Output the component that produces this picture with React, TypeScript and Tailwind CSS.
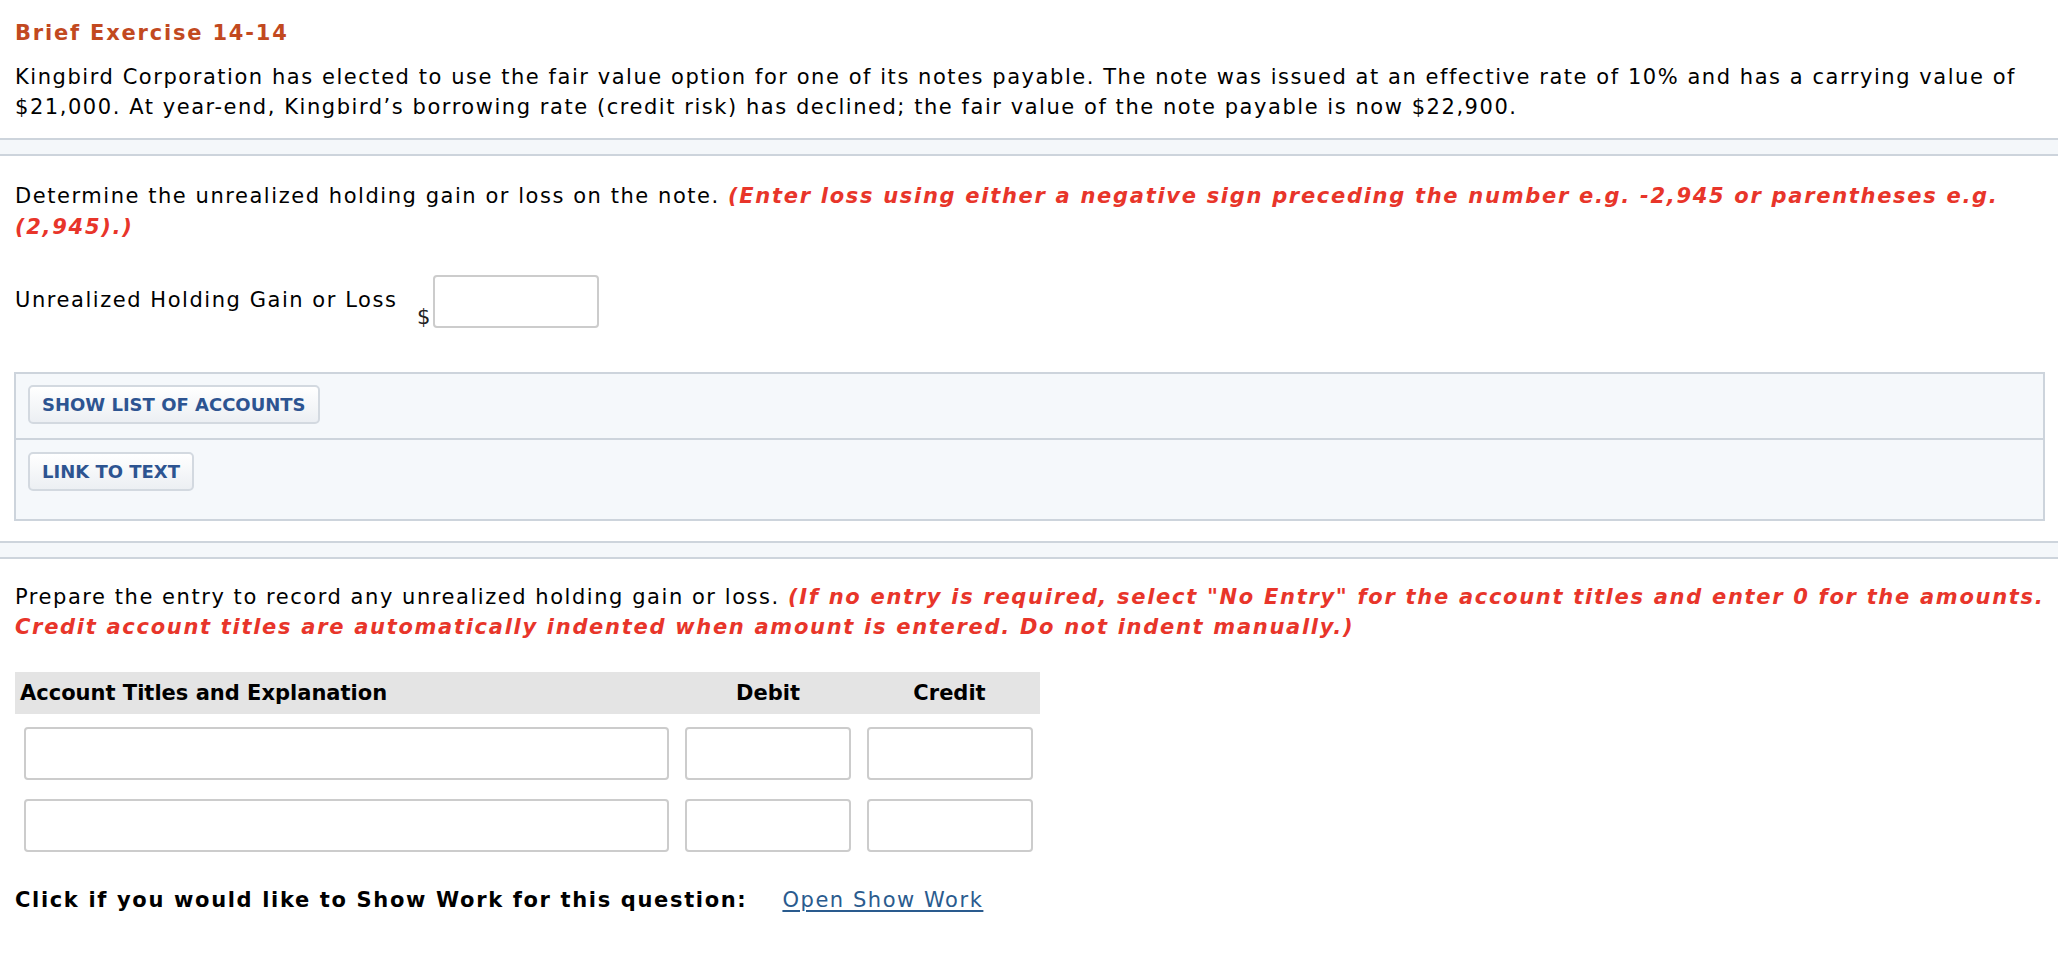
import React from 'react';

const Separator = () => (
  <div className="h-[18px] border-y-2 border-[#cdd4dc] bg-[#f4f7fa]" />
);

const ActionButton = ({ label }: { label: string }) => (
  <button className="h-[39px] px-[12px] rounded-[5px] border-2 border-[#d3d9e0] bg-gradient-to-b from-white to-[#eceff3] text-[18px] font-bold text-[#2d5491] leading-none">
    {label}
  </button>
);

const Field = ({ className }: { className: string }) => (
  <input
    type="text"
    className={`h-[53px] rounded-[4px] border-2 border-[#cccccc] bg-white outline-none ${className}`}
  />
);

const Hint = ({ children }: { children: React.ReactNode }) => (
  <span className="font-bold italic tracking-[1.7px] text-[#e8352a]">{children}</span>
);

export default function App() {
  return (
    <div className="min-h-screen bg-white text-black text-[21px] leading-[30px] tracking-[1.55px] font-['DejaVu_Sans',Verdana,sans-serif]">
      {/* Intro */}
      <div className="px-[15px] pt-[18px] pb-[16px]">
        <h2 className="font-bold tracking-[1.8px] text-[#c2491f] leading-[30px]">Brief Exercise 14-14</h2>
        <p className="mt-[14px] whitespace-nowrap">
          Kingbird Corporation has elected to use the fair value option for one of its notes payable. The note was issued at an effective rate of 10% and has a carrying value of
          <br />
          $21,000. At year-end, Kingbird’s borrowing rate (credit risk) has declined; the fair value of the note payable is now $22,900.
        </p>
      </div>

      <Separator />

      {/* Part 1 */}
      <div className="px-[15px] pt-[25px] pb-[20px]">
        <p className="whitespace-nowrap leading-[31px]">
          Determine the unrealized holding gain or loss on the note.{' '}
          <Hint>
            (Enter loss using either a negative sign preceding the number e.g. -2,945 or parentheses e.g.
            <br />
            (2,945).)
          </Hint>
        </p>

        <div className="mt-[32px] flex items-start">
          <span className="mt-[10px] w-[402px]">Unrealized Holding Gain or Loss</span>
          <div className="flex items-end">
            <span className="mr-[3px] mb-[-4px] tracking-normal text-[#222]">$</span>
            <Field className="w-[166px]" />
          </div>
        </div>

        <div className="mt-[44px] -mx-[1px] mr-[-2px] border-2 border-[#cdd4dc] bg-[#f5f8fb] tracking-normal">
          <div className="h-[64px] pt-[11px] pl-[12px]">
            <ActionButton label="SHOW LIST OF ACCOUNTS" />
          </div>
          <div className="h-[81px] border-t-2 border-[#cdd4dc] pt-[12px] pl-[12px]">
            <ActionButton label="LINK TO TEXT" />
          </div>
        </div>
      </div>

      <Separator />

      {/* Part 2 */}
      <div className="px-[15px] pt-[23px] pb-[40px]">
        <p className="whitespace-nowrap">
          Prepare the entry to record any unrealized holding gain or loss.{' '}
          <Hint>
            (If no entry is required, select "No Entry" for the account titles and enter 0 for the amounts.
            <br />
            Credit account titles are automatically indented when amount is entered. Do not indent manually.)
          </Hint>
        </p>

        <div className="mt-[30px] w-[1025px] tracking-normal">
          <div className="grid grid-cols-[662px_182px_181px] h-[42px] items-center bg-[#e4e4e4] font-bold">
            <span className="pl-[5px]">Account Titles and Explanation</span>
            <span className="text-center">Debit</span>
            <span className="text-center">Credit</span>
          </div>
          <div className="mt-[13px] flex flex-col gap-[19px]">
            {[0, 1].map((row) => (
              <div key={row} className="grid grid-cols-[662px_182px_181px]">
                <div className="pl-[9px] pr-[8px]">
                  <Field className="w-full" />
                </div>
                <div className="px-[8px]">
                  <Field className="w-full" />
                </div>
                <div className="pl-[8px] pr-[7px]">
                  <Field className="w-full" />
                </div>
              </div>
            ))}
          </div>
        </div>

        <div className="mt-[33px] flex items-center">
          <span className="font-bold tracking-[1.65px]">Click if you would like to Show Work for this question:</span>
          <a href="#" className="ml-[35px] text-[#2a5b8e] underline underline-offset-[3px]">
            Open Show Work
          </a>
        </div>
      </div>
    </div>
  );
}
